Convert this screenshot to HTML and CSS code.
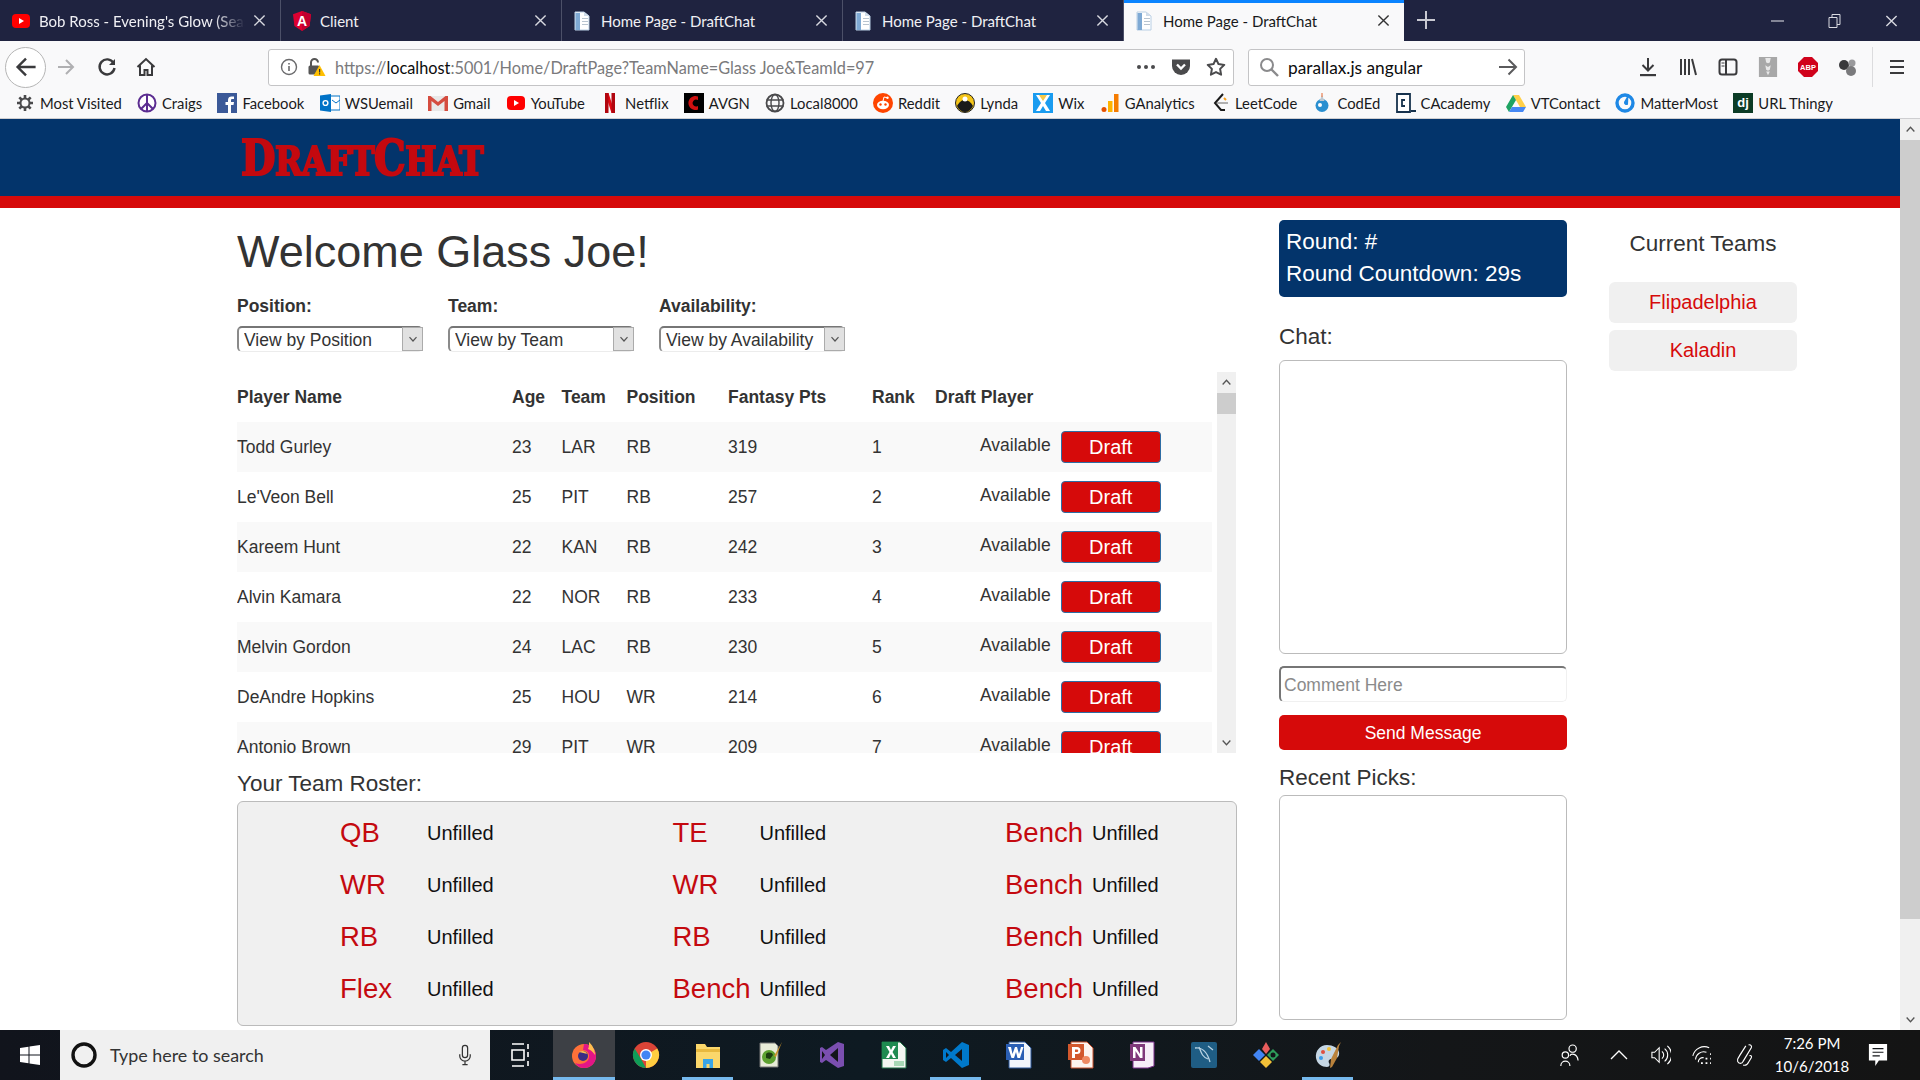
FILE: index.html
```html
<!DOCTYPE html>
<html lang="en">
<head>
<meta charset="utf-8">
<title>Home Page - DraftChat</title>
<link rel="stylesheet" href="styles.css">
</head>
<body>
<svg class="defs" aria-hidden="true">
  <symbol id="x" viewBox="0 0 14 14"><path d="M1.5 1.5 12.5 12.5M12.5 1.5 1.5 12.5" fill="none" stroke="currentColor" stroke-width="1.5"/></symbol>
  <symbol id="doc" viewBox="0 0 20 20"><path d="M2 1h9l5 4v14H2z" fill="#fff" stroke="#b9cfe4"/><path d="M2.5 2H7v17H2.5z" fill="#7ea9d4"/><path d="M11 1v4h5z" fill="#cfdcea"/><path d="M9 7h6v1H9zM9 10h6v1H9zM9 13h6v1H9z" fill="#b8c4d0"/></symbol>
  <symbol id="chev" viewBox="0 0 10 10"><path d="M1.5 3.2 5 7l3.5-3.8" fill="none" stroke="currentColor" stroke-width="1.2"/></symbol>
</svg>
<div class="browser">
  <div class="tabstrip">
    <div class="tab">
      <svg class="tab-icon" viewBox="0 0 20 20"><rect x="1" y="3" width="18" height="14" rx="4" fill="#f00"/><path d="M8 7v6l5-3z" fill="#fff"/></svg>
      <span class="tab-title tab-title-fade">Bob Ross - Evening's Glow (Season 28)</span>
      <svg class="tab-x"><use href="#x"/></svg>
    </div>
    <div class="tab">
      <svg class="tab-icon" viewBox="0 0 20 20"><path d="M10 0 1 3.2l1.4 11.9L10 20l7.600-4.900L19 3.200z" fill="#dd0031"/><path d="M10 0v20l7.600-4.900L19 3.200z" fill="#c3002f"/><text class="ng-a" x="10" y="15" text-anchor="middle">A</text></svg>
      <span class="tab-title">Client</span>
      <svg class="tab-x"><use href="#x"/></svg>
    </div>
    <div class="tab">
      <svg class="tab-icon"><use href="#doc"/></svg>
      <span class="tab-title">Home Page - DraftChat</span>
      <svg class="tab-x"><use href="#x"/></svg>
    </div>
    <div class="tab">
      <svg class="tab-icon"><use href="#doc"/></svg>
      <span class="tab-title">Home Page - DraftChat</span>
      <svg class="tab-x"><use href="#x"/></svg>
    </div>
    <div class="tab tab-active">
      <svg class="tab-icon"><use href="#doc"/></svg>
      <span class="tab-title">Home Page - DraftChat</span>
      <svg class="tab-x"><use href="#x"/></svg>
    </div>
    <svg class="newtab" viewBox="0 0 18 18"><path d="M9 0v18M0 9h18" stroke="#c8c9d2" stroke-width="2"/></svg>
    <div class="winctl">
      <svg class="win-btn" viewBox="0 0 12 12"><path d="M0 6h12" stroke="#d8d9e0"/></svg>
      <svg class="win-btn" viewBox="0 0 12 14"><path d="M3.500 3V.5h8v10H8.500M.5 3.500h8v10h-8z" fill="none" stroke="#d8d9e0"/></svg>
      <svg class="win-btn"><use href="#x" class="win-x"/></svg>
    </div>
  </div>

  <div class="toolbar">
    <div class="nav-back"><svg viewBox="0 0 20 20" class="ico-back"><path d="M18 10H3M10 3l-7 7 7 7" fill="none" stroke="#3a3a3c" stroke-width="2"/></svg></div>
    <svg viewBox="0 0 20 20" class="ico20 nav-fwd"><path d="M2 10h15M10 3l7 7-7 7" fill="none" stroke="#b0b0b2" stroke-width="2"/></svg>
    <svg viewBox="0 0 20 20" class="ico20 nav-reload"><path d="M16.500 6A7.500 7.500 0 1 0 17.500 11" fill="none" stroke="#3a3a3c" stroke-width="2.400"/><path d="M18 2v6h-6z" fill="#3a3a3c"/></svg>
    <svg viewBox="0 0 20 20" class="ico20 nav-home"><path d="M1.500 10 10 2l8.500 8M4 8.500V18h4.500v-5h3v5H16V8.500" fill="none" stroke="#3a3a3c" stroke-width="2"/></svg>
    <div class="urlbar">
      <svg viewBox="0 0 18 18" class="ico18"><circle cx="9" cy="9" r="7.500" fill="none" stroke="#6a6a6c" stroke-width="1.400"/><path d="M8.200 8h1.600v5H8.200zM8.200 5h1.600v1.600H8.200z" fill="#6a6a6c"/></svg>
      <svg viewBox="0 0 20 20" class="ico20 url-lock"><path d="M5 9V5.500a3.500 3.500 0 0 1 7 0" fill="none" stroke="#555" stroke-width="2"/><rect x="2.500" y="8.500" width="11" height="9" rx="1.500" fill="#555"/><path d="M13.500 8 19.500 19h-12z" fill="#ffbf00"/><path d="M13 12h1.200v3.500H13zM13 16.200h1.200v1.300H13z" fill="#333"/></svg>
      <span class="url-text"><span class="url-dim">https://</span>localhost<span class="url-dim">:5001/Home/DraftPage?TeamName=Glass Joe&amp;TeamId=97</span></span>
      <svg viewBox="0 0 20 6" class="url-more"><circle cx="3" cy="3" r="2" fill="#4a4a4c"/><circle cx="10" cy="3" r="2" fill="#4a4a4c"/><circle cx="17" cy="3" r="2" fill="#4a4a4c"/></svg>
      <svg viewBox="0 0 20 20" class="ico20 url-pocket"><path d="M1 2.500h18V9a9 9 0 0 1-18 0z" fill="#4a4a4c"/><path d="M6 7.500l4 4 4-4" fill="none" stroke="#fff" stroke-width="2.400"/></svg>
      <svg viewBox="0 0 20 20" class="ico20 url-star"><path d="M10 1.800l2.500 5.300 5.800.8-4.200 4 1 5.800L10 15.100l-5.100 2.600 1-5.800-4.200-4 5.800-.8z" fill="none" stroke="#4a4a4c" stroke-width="2" stroke-linejoin="round"/></svg>
    </div>
    <div class="searchbar">
      <svg viewBox="0 0 20 20" class="ico20"><circle cx="8" cy="8" r="6" fill="none" stroke="#8a8a8c" stroke-width="2"/><path d="M12.500 12.500 19 19" stroke="#8a8a8c" stroke-width="2.400"/></svg>
      <span class="search-text">parallax.js angular</span>
      <svg viewBox="0 0 20 20" class="ico20 search-go"><path d="M1 10h17M10.500 2.500 18 10l-7.500 7.500" fill="none" stroke="#5a5a5c" stroke-width="2"/></svg>
    </div>
    <div class="toolicons">
      <svg viewBox="0 0 20 20" class="ico20"><path d="M10 1v12M4.500 8l5.500 5.500L15.500 8" fill="none" stroke="#3a3a3c" stroke-width="2"/><path d="M2 17h16v2.200H2z" fill="#3a3a3c"/></svg>
      <svg viewBox="0 0 20 20" class="ico20"><path d="M3 2v16M7 2v16M11 2v16M14 2l4 16" fill="none" stroke="#3a3a3c" stroke-width="2"/></svg>
      <svg viewBox="0 0 20 20" class="ico20"><rect x="1.500" y="2.500" width="17" height="15" rx="2.500" fill="none" stroke="#3a3a3c" stroke-width="2"/><path d="M8 3v14" stroke="#3a3a3c" stroke-width="2"/><path d="M3.500 6h3M3.500 9h3" stroke="#3a3a3c"/></svg>
      <svg viewBox="0 0 20 22" class="ico20"><rect width="20" height="22" fill="#a8a8a8"/><path d="M7 1h6l-1 5-2 1-2-1zM7 9l3 2 3-2-1 5-2 1-2-1zM8 16h4l-2 4z" fill="#e8e8e8"/></svg>
      <svg viewBox="0 0 20 20" class="ico20"><path d="M6 0h8l6 6v8l-6 6H6l-6-6V6z" fill="#d0021b"/><text class="abp" x="10" y="13" text-anchor="middle">ABP</text></svg>
      <svg viewBox="0 0 20 20" class="ico20"><circle cx="6" cy="8" r="5" fill="#3a3a3c"/><circle cx="14" cy="6" r="3.500" fill="#9a9a9c"/><circle cx="13" cy="14" r="5" fill="#7a7a7c"/></svg>
      <span class="tool-sep"></span>
      <svg viewBox="0 0 20 20" class="ico20"><path d="M3 4h14M3 10h14M3 16h14" stroke="#3a3a3c" stroke-width="2.200"/></svg>
    </div>
  </div>

  <div class="bookmarks">
    <a class="bm"><svg viewBox="0 0 20 20" class="bm-ico"><path d="M10 2v3M10 15v3M2 10h3M15 10h3M4.300 4.300l2.200 2.200M13.500 13.500l2.200 2.200M15.700 4.300l-2.200 2.200M6.500 13.500l-2.200 2.200" stroke="#4a4a4c" stroke-width="2.600"/><circle cx="10" cy="10" r="4.500" fill="none" stroke="#4a4a4c" stroke-width="2"/></svg>Most Visited</a>
    <a class="bm"><svg viewBox="0 0 20 20" class="bm-ico"><circle cx="10" cy="10" r="8.500" fill="#fff" stroke="#5c2d91" stroke-width="2"/><path d="M10 1.500v17M10 10l-6 6M10 10l6 6" stroke="#5c2d91" stroke-width="2"/></svg>Craigs</a>
    <a class="bm"><svg viewBox="0 0 20 20" class="bm-ico"><rect width="20" height="20" y="0" fill="#3b5998"/><path d="M11 20v-8H8.500V9H11V7c0-2.500 1.500-3.500 3.500-3.500H17V6h-1.600c-1 0-1.400.5-1.400 1.300V9h3l-.5 3H14v8z" fill="#fff"/></svg>Facebook</a>
    <a class="bm"><svg viewBox="0 0 20 20" class="bm-ico"><path d="M8 3h12v14H8z" fill="#fff" stroke="#0072c6"/><path d="M0 2.500 11 1v18L0 17.500z" fill="#0072c6"/><circle cx="5.500" cy="10" r="2.400" fill="none" stroke="#fff" stroke-width="1.400"/><path d="M12 7l4 3 4-3" fill="none" stroke="#0072c6"/></svg>WSUemail</a>
    <a class="bm"><svg viewBox="0 0 20 20" class="bm-ico"><rect y="3" width="20" height="15" fill="#e8e8e8"/><path d="M0 3v15h3.500V8l6.500 5 6.500-5v10H20V3h-2.500L10 9 2.500 3z" fill="#d54c3f"/></svg>Gmail</a>
    <a class="bm"><svg viewBox="0 0 20 20" class="bm-ico"><rect x="1" y="3" width="18" height="14" rx="4" fill="#f00"/><path d="M8 7v6l5-3z" fill="#fff"/></svg>YouTube</a>
    <a class="bm"><svg viewBox="0 0 20 20" class="bm-ico"><path d="M5 0h3.500L15 20h-3.500z" fill="#e50914"/><path d="M5 0h3.500v20L5 20zM11.500 0H15v20h-3.500z" fill="#b1060f"/></svg>Netflix</a>
    <a class="bm"><svg viewBox="0 0 20 20" class="bm-ico"><rect width="20" height="20" fill="#000"/><path d="M14 3.500A7 7 0 1 0 14 16.500V13a3.500 3.500 0 1 1 0-6z" fill="#d01010"/></svg>AVGN</a>
    <a class="bm"><svg viewBox="0 0 20 20" class="bm-ico"><circle cx="10" cy="10" r="8.500" fill="none" stroke="#4a4a4c" stroke-width="1.800"/><ellipse cx="10" cy="10" rx="4" ry="8.500" fill="none" stroke="#4a4a4c" stroke-width="1.400"/><path d="M1.500 7h17M1.500 13h17" stroke="#4a4a4c" stroke-width="1.400"/></svg>Local8000</a>
    <a class="bm"><svg viewBox="0 0 20 20" class="bm-ico"><circle cx="10" cy="10" r="10" fill="#ff4500"/><ellipse cx="10" cy="12" rx="6" ry="4.200" fill="#fff"/><circle cx="7.500" cy="11.500" r="1.200" fill="#ff4500"/><circle cx="12.500" cy="11.500" r="1.200" fill="#ff4500"/><path d="M10 8l1-4 3 .7" fill="none" stroke="#fff"/><circle cx="14.500" cy="4.800" r="1.200" fill="#fff"/></svg>Reddit</a>
    <a class="bm"><svg viewBox="0 0 20 20" class="bm-ico"><circle cx="10" cy="10" r="9.500" fill="#f5c518" stroke="#222"/><path d="M2 13c3-5 5-6 8-6s6 2 8 6c-2 4-5 6-8 6s-6-2-8-6z" fill="#1a1a1a"/><circle cx="10" cy="6" r="2.500" fill="#fff"/></svg>Lynda</a>
    <a class="bm"><svg viewBox="0 0 20 20" class="bm-ico"><rect width="20" height="20" fill="#1a9cf0"/><path d="M3 2h4l3 5 3-5h4l-5 8 5 8h-4l-3-5-3 5H3l5-8z" fill="#fff"/><path d="M6 2h8l-4 6z" fill="#f7c948"/></svg>Wix</a>
    <a class="bm"><svg viewBox="0 0 20 20" class="bm-ico"><rect x="14" y="1" width="4.500" height="18" fill="#f57c00"/><rect x="8" y="8" width="4.500" height="11" fill="#ffb300"/><circle cx="4" cy="16.500" r="2.500" fill="#e65100"/></svg>GAnalytics</a>
    <a class="bm"><svg viewBox="0 0 20 20" class="bm-ico"><path d="M13 1 5 10l6 7h4" fill="none" stroke="#1a1a1a" stroke-width="2"/><path d="M7 10h11" stroke="#b0b0b0" stroke-width="2"/><path d="M14 5l2 2" stroke="#f89f1b" stroke-width="2"/></svg>LeetCode</a>
    <a class="bm"><svg viewBox="0 0 20 20" class="bm-ico"><circle cx="10" cy="12.500" r="6.500" fill="#2a8fd0"/><path d="M10 2l2.500 6h-5z" fill="#bfc8d0"/><path d="M10 0v4" stroke="#e6672e"/><circle cx="8" cy="12" r="2" fill="#fff"/></svg>CodEd</a>
    <a class="bm"><svg viewBox="0 0 20 20" class="bm-ico"><path d="M1 1h13v18H1z" fill="#fff" stroke="#17324d" stroke-width="1.800"/><path d="M9 7H6v6h3" fill="none" stroke="#17324d" stroke-width="1.800"/><path d="M15 17h5v2h-5z" fill="#17324d"/></svg>CAcademy</a>
    <a class="bm"><svg viewBox="0 0 20 20" class="bm-ico"><path d="M7 2h6l7 12h-6z" fill="#ffcf48"/><path d="M7 2 0 14l3 5 7-12z" fill="#1ea362"/><path d="M3 19h14l3-5H6z" fill="#4688f4"/></svg>VTContact</a>
    <a class="bm"><svg viewBox="0 0 20 20" class="bm-ico"><circle cx="10" cy="10" r="8" fill="none" stroke="#1e88e5" stroke-width="3.400"/><path d="M13.500 1 9 9a2.500 2.500 0 0 0 4 2.500z" fill="#1e88e5"/></svg>MatterMost</a>
    <a class="bm"><svg viewBox="0 0 20 20" class="bm-ico"><rect width="20" height="20" fill="#0c3c26"/><text class="dj" x="10" y="14" text-anchor="middle">dj</text></svg>URL Thingy</a>
  </div>

  <div class="viewport">
    <div class="page">
      <header class="site-header">
        <div class="logo"><span class="logo-big">D</span>raft<span class="logo-big">C</span>hat</div>
      </header>
      <div class="columns">
        <main class="main-col">
          <h1 class="welcome">Welcome Glass Joe!</h1>
          <div class="filters">
            <div class="filter">
              <label class="filter-label">Position:</label>
              <div class="select-wrap"><select class="select"><option>View by Position</option></select><span class="select-arrow"><svg><use href="#chev"/></svg></span></div>
            </div>
            <div class="filter">
              <label class="filter-label">Team:</label>
              <div class="select-wrap"><select class="select"><option>View by Team</option></select><span class="select-arrow"><svg><use href="#chev"/></svg></span></div>
            </div>
            <div class="filter">
              <label class="filter-label">Availability:</label>
              <div class="select-wrap"><select class="select"><option>View by Availability</option></select><span class="select-arrow"><svg><use href="#chev"/></svg></span></div>
            </div>
          </div>
          <div class="players">
            <div class="players-clip">
              <table class="player-table">
                <colgroup><col class="c-name"><col class="c-age"><col class="c-team"><col class="c-pos"><col class="c-pts"><col class="c-rank"><col></colgroup>
                <thead><tr><th>Player Name</th><th>Age</th><th>Team</th><th>Position</th><th>Fantasy Pts</th><th>Rank</th><th>Draft Player</th></tr></thead>
                <tbody>
                  <tr><td>Todd Gurley</td><td>23</td><td>LAR</td><td>RB</td><td>319</td><td>1</td><td class="draft-cell"><span class="avail">Available</span><button class="draft-btn">Draft</button></td></tr>
                  <tr><td>Le'Veon Bell</td><td>25</td><td>PIT</td><td>RB</td><td>257</td><td>2</td><td class="draft-cell"><span class="avail">Available</span><button class="draft-btn">Draft</button></td></tr>
                  <tr><td>Kareem Hunt</td><td>22</td><td>KAN</td><td>RB</td><td>242</td><td>3</td><td class="draft-cell"><span class="avail">Available</span><button class="draft-btn">Draft</button></td></tr>
                  <tr><td>Alvin Kamara</td><td>22</td><td>NOR</td><td>RB</td><td>233</td><td>4</td><td class="draft-cell"><span class="avail">Available</span><button class="draft-btn">Draft</button></td></tr>
                  <tr><td>Melvin Gordon</td><td>24</td><td>LAC</td><td>RB</td><td>230</td><td>5</td><td class="draft-cell"><span class="avail">Available</span><button class="draft-btn">Draft</button></td></tr>
                  <tr><td>DeAndre Hopkins</td><td>25</td><td>HOU</td><td>WR</td><td>214</td><td>6</td><td class="draft-cell"><span class="avail">Available</span><button class="draft-btn">Draft</button></td></tr>
                  <tr><td>Antonio Brown</td><td>29</td><td>PIT</td><td>WR</td><td>209</td><td>7</td><td class="draft-cell"><span class="avail">Available</span><button class="draft-btn">Draft</button></td></tr>
                </tbody>
              </table>
            </div>
            <div class="mini-scroll">
              <span class="sb-arrow"><svg class="sb-up"><use href="#chev"/></svg></span>
              <span class="mini-thumb"></span>
              <span class="sb-fill"></span>
              <span class="sb-arrow"><svg><use href="#chev"/></svg></span>
            </div>
          </div>
          <h4 class="roster-title">Your Team Roster:</h4>
          <div class="roster">
            <div class="slot"><span class="slot-pos">QB</span><span class="slot-val">Unfilled</span></div>
            <div class="slot"><span class="slot-pos">TE</span><span class="slot-val">Unfilled</span></div>
            <div class="slot"><span class="slot-pos">Bench</span><span class="slot-val">Unfilled</span></div>
            <div class="slot"><span class="slot-pos">WR</span><span class="slot-val">Unfilled</span></div>
            <div class="slot"><span class="slot-pos">WR</span><span class="slot-val">Unfilled</span></div>
            <div class="slot"><span class="slot-pos">Bench</span><span class="slot-val">Unfilled</span></div>
            <div class="slot"><span class="slot-pos">RB</span><span class="slot-val">Unfilled</span></div>
            <div class="slot"><span class="slot-pos">RB</span><span class="slot-val">Unfilled</span></div>
            <div class="slot"><span class="slot-pos">Bench</span><span class="slot-val">Unfilled</span></div>
            <div class="slot"><span class="slot-pos">Flex</span><span class="slot-val">Unfilled</span></div>
            <div class="slot"><span class="slot-pos">Bench</span><span class="slot-val">Unfilled</span></div>
            <div class="slot"><span class="slot-pos">Bench</span><span class="slot-val">Unfilled</span></div>
          </div>
        </main>

        <aside class="chat-col">
          <div class="round-box">
            <div>Round: #</div>
            <div>Round Countdown: 29s</div>
          </div>
          <h4 class="chat-title">Chat:</h4>
          <div class="chat-log"></div>
          <input class="comment" type="text" placeholder="Comment Here">
          <button class="send-btn">Send Message</button>
          <h4 class="picks-title">Recent Picks:</h4>
          <div class="picks-log"></div>
        </aside>

        <aside class="teams-col">
          <h4 class="teams-title">Current Teams</h4>
          <div class="team-pill">Flipadelphia</div>
          <div class="team-pill">Kaladin</div>
        </aside>
      </div>
    </div>
    <div class="page-scroll">
      <span class="sb-arrow-lg"><svg class="sb-up"><use href="#chev"/></svg></span>
      <span class="page-thumb"></span>
      <span class="sb-fill"></span>
      <span class="sb-arrow-lg"><svg><use href="#chev"/></svg></span>
    </div>
  </div>

  <footer class="taskbar">
    <div class="tb-start"><svg viewBox="0 0 20 20" class="tb-ico-start"><path d="M0 3l8.500-1.200V9.500H0zM9.500 1.600 20 0v9.500H9.500zM0 10.500h8.500v7.700L0 17zM9.500 10.500H20V20L9.500 18.400z" fill="#fff"/></svg></div>
    <div class="tb-search">
      <svg viewBox="0 0 26 26" class="tb-cortana"><circle cx="13" cy="13" r="11" fill="none" stroke="#111" stroke-width="3.400"/></svg>
      <span class="tb-search-text">Type here to search</span>
      <svg viewBox="0 0 16 24" class="tb-mic"><rect x="5" y="1" width="6" height="14" rx="3" fill="none" stroke="#333" stroke-width="1.400"/><path d="M2 11v2a6 6 0 0 0 12 0v-2M8 19v4M5 23h6" fill="none" stroke="#333" stroke-width="1.400"/></svg>
    </div>
    <div class="tb-taskview"><svg viewBox="0 0 20 24" class="tb-ico-view"><path d="M1 1h12M1 23h12M1 7h12v10H1zM17 1v5M17 9v5M17 18v5" fill="none" stroke="#fff" stroke-width="1.600"/></svg></div>
    <div class="tb-app tb-current running"><svg viewBox="0 0 28 28" class="tb-ico"><circle cx="14" cy="15" r="12" fill="#ff7139"/><path d="M14 3c7 0 12 5 12 12 0 7-5 12-12 12-4 0-7-2-9-5 5 2 13 1 14-6 .5-4-2-7-6-7z" fill="#e31587"/><path d="M19 1c3 3 6 7 6 13-2-3-4-5-7-6 1-2 1-4 1-7z" fill="#ffbd4f"/><circle cx="13" cy="15" r="5" fill="#3b2d83"/><path d="M9 11c3-2 7-1 8 2-2-1-5-1-8-2z" fill="#ffbd4f"/></svg></div>
    <div class="tb-app"><svg viewBox="0 0 28 28" class="tb-ico"><circle cx="14" cy="14" r="13" fill="#db4437"/><path d="M14 14 25.300 7.500A13 13 0 0 1 14 27z" fill="#ffcd40"/><path d="M14 27A13 13 0 0 1 2.700 7.500L8.500 17z" fill="#0f9d58"/><circle cx="14" cy="14" r="6" fill="#fff"/><circle cx="14" cy="14" r="4.600" fill="#4285f4"/></svg></div>
    <div class="tb-app running"><svg viewBox="0 0 28 28" class="tb-ico"><path d="M2 3h9l2 3h13v21H2z" fill="#fbd76b"/><path d="M2 8h24v3H2z" fill="#e8b93f"/><path d="M9 18h10v9h-3.500v-4h-3v4H9z" fill="#3aa5e6"/></svg></div>
    <div class="tb-app"><svg viewBox="0 0 28 28" class="tb-ico"><path d="M4 2h15l3 3v21H4z" fill="#e8ecd8" stroke="#777"/><circle cx="13" cy="16" r="7" fill="#5da130"/><path d="M10 13c2-2 6-2 7 1l-3 4-4-1z" fill="#1d3d10"/><path d="M26 1l-6 15-2-1z" fill="#c9932a"/></svg></div>
    <div class="tb-app"><svg viewBox="0 0 28 28" class="tb-ico"><path d="M20 1 26 3v22l-6 2-12-8-4 3-2-1V7l2-1 4 3z" fill="#7b4fb0"/><path d="M20 7 12 14l8 7z" fill="#131519"/><path d="M4 10v8l3-4z" fill="#131519"/></svg></div>
    <div class="tb-app"><svg viewBox="0 0 28 28" class="tb-ico"><path d="M2 1h18l6 6v20H2z" fill="#f3f6f1" stroke="#1d7044"/><path d="M2 1h16v17H2z" fill="#1f8a50"/><path d="M6 5h3l2 4 2-4h3l-3.500 6 3.500 6h-3l-2-4-2 4H6l3.500-6z" fill="#fff"/><path d="M14 20h10v5H14z" fill="#a7d7b5"/></svg></div>
    <div class="tb-app running"><svg viewBox="0 0 28 28" class="tb-ico"><path d="M20 1 27 4v20l-7 3-11-10-5 4-3-2V9l3-2 5 4z" fill="#0079cb"/><path d="M20 8l-7 6 7 6z" fill="#131519"/><path d="M4 11v6l3-3z" fill="#131519"/></svg></div>
    <div class="tb-app"><svg viewBox="0 0 28 28" class="tb-ico"><path d="M5 1h16l6 6v20H5z" fill="#f3f6fb" stroke="#2a5699"/><path d="M2 3h18v16H2z" fill="#2b5fb4"/><path d="M4 6h3l1.500 7L11 6h2l2 7 2-7h2.500L16 17h-2.500L12 11l-2 6H7.500z" fill="#fff"/></svg></div>
    <div class="tb-app"><svg viewBox="0 0 28 28" class="tb-ico"><path d="M5 1h16l6 6v20H5z" fill="#fdf4ef" stroke="#c9502a"/><path d="M2 3h16v16H2z" fill="#d2582d"/><path d="M6 6h5a3.500 3.500 0 0 1 0 7H9v4H6zM9 8.500V11h2a1.200 1.200 0 0 0 0-2.500z" fill="#fff"/><circle cx="20" cy="19" r="4" fill="#ef8a63"/></svg></div>
    <div class="tb-app"><svg viewBox="0 0 28 28" class="tb-ico"><path d="M5 1h21v24l-6 2H5z" fill="#f7eef8" stroke="#7d2f8d"/><path d="M2 3h15v17H2z" fill="#80397b"/><path d="M5 6h2.500L12 13V6h2.500v11H12L7.500 10v7H5z" fill="#fff"/></svg></div>
    <div class="tb-app"><svg viewBox="0 0 28 28" class="tb-ico"><rect x="1" y="1" width="26" height="26" rx="2" fill="#1f5d84"/><path d="M5 7c6-1 12 3 15 14M9 6c2 5 3 10 9 12M18 5l5 4" fill="none" stroke="#b8d3e4" stroke-width="1.300"/></svg></div>
    <div class="tb-app"><svg viewBox="0 0 28 28" class="tb-ico"><path d="M14 1l4 7-4 5-4-5z" fill="#e85d5d"/><path d="M1 14l6-6 6 6-6 6z" fill="#4285f4"/><path d="M15 14l6-6 6 6-6 6z" fill="#2e9e5b"/><path d="M8 21l6-6 6 6-6 6z" fill="#f2c037"/><circle cx="21" cy="14" r="2.500" fill="#131519"/></svg></div>
    <div class="tb-app running"><svg viewBox="0 0 28 28" class="tb-ico"><path d="M13 4C6 4 1 10 2 17c1 6 6 9 11 9 3 0 3-3 2-4-1-2 0-4 3-4 4 0 8-2 7-7-1-4-6-7-12-7z" fill="#c5d6e4"/><circle cx="9" cy="11" r="2" fill="#e04f3f"/><circle cx="15" cy="8" r="2" fill="#f2c037"/><circle cx="7" cy="17" r="2" fill="#3d9be9"/><path d="M27 1l-3 3-7 14-1 9 2-1 5-9 2-12z" fill="#b9823c"/></svg></div>
    <div class="tray">
      <div class="tray-cell tray-people"><svg viewBox="0 0 22 26" class="tray-ico"><circle cx="15" cy="6" r="4" fill="none" stroke="#fff" stroke-width="1.300"/><circle cx="7" cy="13" r="3.500" fill="none" stroke="#fff" stroke-width="1.300"/><path d="M2 25c0-7 10-7 10 0M12 14c1-3 8-3 9 5" fill="none" stroke="#fff" stroke-width="1.300"/></svg></div>
      <div class="tray-cell tray-caret"><svg viewBox="0 0 18 10" class="tray-caret-ico"><path d="M1 9 9 1l8 8" fill="none" stroke="#fff" stroke-width="1.300"/></svg></div>
      <div class="tray-cell tray-vol"><svg viewBox="0 0 22 22" class="tray-ico"><path d="M1 8h3l5-5v16l-5-5H1z" fill="none" stroke="#fff" stroke-width="1.200"/><path d="M12 7a5 5 0 0 1 0 8M15 4a9 9 0 0 1 0 14M18 1a13 13 0 0 1 0 20" fill="none" stroke="#fff" stroke-width="1.200"/></svg></div>
      <div class="tray-cell tray-wifi"><svg viewBox="0 0 22 22" class="tray-ico"><path d="M2 12A13 13 0 0 1 20 3M5 16a9 9 0 0 1 12-8M8 19a5 5 0 0 1 6-5" fill="none" stroke="#fff" stroke-width="1.200"/><path d="M11 20h2M16 20h2M16 15h2M21 20h1M21 15h1M21 10h1" stroke="#fff" stroke-width="2"/></svg></div>
      <div class="tray-cell tray-pen"><svg viewBox="0 0 22 26" class="tray-ico"><path d="M16 2c2-1 4 1 3 3l-9 15c-1 3-5 3-6 0s1-4 2-6l7-11M10 24c3 1 5-1 6-3l3-5c1-2-1-3-2-2" fill="none" stroke="#fff" stroke-width="1.300"/></svg></div>
      <div class="tray-cell tray-clock"><div>7:26 PM</div><div>10/6/2018</div></div>
      <div class="tray-cell tray-notif"><svg viewBox="0 0 22 26" class="tray-ico"><path d="M1 1h20v18h-9l-4 6v-6H1z" fill="#fff"/><path d="M5 6h12M5 10h12M5 14h8" stroke="#131519" stroke-width="1.300"/></svg></div>
    </div>
  </footer>
</div>
</body>
</html>
```

FILE: styles.css
```css
* { box-sizing: border-box; }
html, body { margin: 0; padding: 0; height: 100%; overflow: hidden; background: #fff; }
body { font-family: "Liberation Sans", Arial, sans-serif; font-size: 17.5px; color: #333; }
.defs { display: none; }
h1, h4 { margin: 0; font-weight: 400; }
svg { display: block; flex: none; }

.browser { display: flex; flex-direction: column; height: 1080px; }

/* tab strip */
.tabstrip { display: flex; height: 41px; flex: none; background: #1f2340; color: #f0f0f4; font-family: "Lato", sans-serif; font-size: 15px; }
.tab { width: 281px; display: flex; align-items: center; padding: 0 14px 0 11px; border-right: 1px solid #4c5068; }
.tab-active { width: 280px; background: #f9f9fa; color: #18191b; border-right: 0; border-top: 3px solid #0a84ff; padding-bottom: 3px; }
.tab-icon { width: 20px; height: 20px; margin-right: 8px; }
.tab-title { flex: 1; min-width: 0; white-space: nowrap; overflow: hidden; }
.tab-title-fade { -webkit-mask-image: linear-gradient(to right, #000 85%, transparent); mask-image: linear-gradient(to right, #000 85%, transparent); }
.tab-x { width: 13px; height: 13px; margin-left: 8px; color: #d8d9e0; }
.tab-active .tab-x { color: #333; }
.ng-a { font: 700 14px "Liberation Sans", sans-serif; fill: #fff; }
.newtab { width: 18px; height: 18px; margin: 11px 0 0 13px; }
.winctl { margin-left: auto; display: flex; align-items: center; gap: 44px; padding-right: 22px; }
.win-btn { width: 13px; height: 14px; color: #d8d9e0; }

/* toolbar */
.toolbar { height: 47px; flex: none; display: flex; align-items: center; background: #f9f9fa; padding: 5px 0 0 5px; }
.ico20 { width: 20px; height: 20px; }
.ico18 { width: 18px; height: 18px; }
.ico-back { width: 24px; height: 24px; }
.nav-back { width: 41px; height: 41px; border-radius: 50%; border: 1px solid #b5b5b5; background: #fff; display: flex; align-items: center; justify-content: center; }
.nav-fwd { margin-left: 10px; }
.nav-reload { margin-left: 21px; }
.nav-home { margin-left: 19px; }
.urlbar { margin-left: 112px; width: 966px; height: 37px; background: #fff; border: 1px solid #c4c4c6; border-radius: 3px; display: flex; align-items: center; padding: 0 7px 0 11px; }
.url-lock { margin-left: 8px; }
.url-text { margin-left: 9px; font-family: "Lato", sans-serif; font-size: 16.3px; color: #0c0c0d; white-space: nowrap; }
.url-dim { color: #7a7a7c; }
.url-more { width: 20px; height: 6px; margin-left: auto; }
.url-pocket { margin-left: 15px; }
.url-star { margin-left: 15px; }
.searchbar { margin-left: 14px; width: 277px; height: 37px; background: #fff; border: 1px solid #c4c4c6; border-radius: 3px; display: flex; align-items: center; padding: 0 6px 0 10px; }
.search-text { margin-left: 9px; font-family: "Lato", sans-serif; font-size: 17.3px; color: #0c0c0d; white-space: nowrap; }
.search-go { margin-left: auto; }
.toolicons { display: flex; align-items: center; margin-left: 113px; gap: 20px; }
.tool-sep { width: 1px; height: 40px; background: #dcdcde; margin: 0 -6px 0 -6px; }

/* bookmarks */
.bookmarks { height: 31px; flex: none; background: #f9f9fa; border-bottom: 1px solid #cfcfd1; display: flex; align-items: center; gap: 15.25px; padding-left: 15px; font-family: "Lato", sans-serif; font-size: 14.8px; color: #1a1a1c; }
.bm { display: flex; align-items: center; gap: 5px; white-space: nowrap; }
.bm-ico { width: 20px; height: 20px; }
.abp { font: 700 7.500px "Liberation Sans", sans-serif; fill: #fff; }
.dj { font: 700 13px "Liberation Sans", sans-serif; fill: #fff; }

/* viewport */
.viewport { flex: 1; min-height: 0; display: flex; }
.page { flex: 1; min-width: 0; overflow: hidden; }
.site-header { height: 89px; background: #03346b; border-bottom: 12px solid #d60a0a; display: flex; align-items: flex-start; padding: 20px 0 0 241px; }
.logo { font-family: "DejaVu Serif Condensed", "DejaVu Serif", serif; font-weight: 700; font-size: 40px; line-height: 38px; text-transform: uppercase; color: #c4090f; letter-spacing: -0.6px; -webkit-text-stroke: 2px #c4090f; white-space: nowrap; transform: scaleX(0.92); transform-origin: left center; }
.logo-big { font-size: 48px; }

.columns { display: flex; padding-left: 237px; }
.main-col { width: 1000px; flex: none; }
.welcome { font-size: 45px; line-height: 50px; margin-top: 19px; color: #333; }
.filters { display: flex; gap: 25px; margin-top: 17px; }
.filter { width: 186px; }
.filter-label { display: block; font-weight: 700; line-height: 25px; margin-bottom: 7px; }
.select-wrap { position: relative; height: 26px; }
.select { appearance: none; width: 100%; height: 26px; padding: 0 0 0 5px; font: 17.5px "Liberation Sans", sans-serif; color: #333; background: #fff; border: 1px solid #ececec; border-top: 2px solid #767676; border-left: 2px solid #8a8a8a; border-radius: 5px; }
.select-arrow { position: absolute; right: 0; top: 1px; width: 21px; height: 24px; background: #e1e1e1; border: 1px solid #ababab; display: flex; align-items: center; justify-content: center; color: #555; }
.select-arrow svg { width: 10px; height: 10px; }

.players { display: flex; gap: 5px; height: 381px; margin-top: 20px; }
.players-clip { width: 975px; flex: none; overflow: hidden; }
.player-table { width: 975px; table-layout: fixed; border-collapse: collapse; }
.c-name { width: 275px; }
.c-age { width: 49.5px; }
.c-team { width: 65px; }
.c-pos { width: 101.5px; }
.c-pts { width: 144px; }
.c-rank { width: 63px; }
.player-table th { height: 50px; padding: 0; text-align: left; font-weight: 700; }
.player-table td { height: 50px; padding: 0; }
.player-table tbody tr:nth-child(odd) { background: #f9f9f9; }
.draft-cell { white-space: nowrap; padding-left: 45px !important; }
.avail { display: inline-block; position: relative; top: -1px; }
.draft-btn { width: 100px; height: 32px; margin-left: 10px; padding: 0; background: #d60a0a; color: #fff; border: 1px solid #2e6da4; border-radius: 4px; font: 20px "Liberation Sans", sans-serif; vertical-align: middle; }
.mini-scroll { width: 19px; background: #f0f0f0; display: flex; flex-direction: column; color: #555; }
.sb-arrow { height: 21px; display: flex; align-items: center; justify-content: center; flex: none; }
.sb-arrow svg, .sb-arrow-lg svg { width: 11px; height: 11px; }
.sb-up { transform: rotate(180deg); }
.mini-thumb { height: 21px; background: #cdcdcd; flex: none; }
.sb-fill { flex: 1; }

.roster-title { font-size: 22.5px; line-height: 30px; margin-top: 16px; margin-bottom: 2px; }
.roster { width: 1000px; height: 225px; background: #f0f0f0; border: 1px solid #bbb; border-radius: 6px; padding: 5px 0 0 102px; display: grid; grid-template-columns: repeat(3, 332.5px); grid-auto-rows: 52px; }
.slot { display: flex; align-items: center; }
.slot-pos { width: 87px; font-size: 27.5px; color: #c4090f; }
.slot-val { font-size: 20px; color: #111; }

/* chat */
.chat-col { width: 288px; flex: none; margin-left: 42px; padding-top: 12px; }
.round-box { height: 77px; background: #03346b; color: #fff; border-radius: 5px; padding: 6px 7px; font-size: 22.5px; line-height: 32px; }
.chat-title { font-size: 22.5px; line-height: 30px; margin-top: 25px; margin-bottom: 8px; }
.chat-log { height: 294px; border: 1px solid #bbb; border-radius: 6px; background: #fff; }
.comment { display: block; width: 100%; height: 36px; margin-top: 12px; padding: 1px 0 0 3px; font: 17.5px "Liberation Sans", sans-serif; color: #333; border: 1px solid #f0f0f0; border-top: 2px solid #767676; border-left: 2px solid #767676; border-radius: 5px; background: #fff; outline: none; }
.comment::placeholder { color: #8b8b8b; opacity: 1; }
.send-btn { display: block; width: 100%; height: 35px; margin-top: 13px; padding: 1px 0 0; background: #d60a0a; color: #fff; border: 0; border-radius: 5px; font: 17.5px "Liberation Sans", sans-serif; }
.picks-title { font-size: 22.5px; line-height: 30px; margin-top: 13px; margin-bottom: 2px; }
.picks-log { height: 225px; border: 1px solid #bbb; border-radius: 6px; background: #fff; }

/* teams */
.teams-col { width: 188px; flex: none; margin-left: 42px; padding-top: 21px; }
.teams-title { font-size: 22.5px; line-height: 30px; text-align: center; margin-bottom: 23px; }
.team-pill { height: 41px; margin-bottom: 7px; background: #f0f0f0; border-radius: 6px; color: #d60a0a; font-size: 20px; display: flex; align-items: center; justify-content: center; }

/* page scrollbar */
.page-scroll { width: 20px; flex: none; background: #f0f0f0; display: flex; flex-direction: column; color: #555; }
.sb-arrow-lg { height: 21px; display: flex; align-items: center; justify-content: center; flex: none; }
.page-thumb { height: 779px; background: #cdcdcd; flex: none; }

/* taskbar */
.taskbar { height: 50px; flex: none; display: flex; color: #fff; background: linear-gradient(to right, #11141c 0%, #0e1a22 45%, #141618 75%, #141414 100%); }
.tb-start { width: 60px; display: flex; align-items: center; justify-content: center; }
.tb-ico-start { width: 20px; height: 20px; }
.tb-search { width: 430px; background: #f0f0f0; display: flex; align-items: center; padding: 0 18px 0 11px; color: #333; }
.tb-cortana { width: 26px; height: 26px; }
.tb-search-text { margin-left: 13px; font-family: "Lato", sans-serif; font-size: 17.9px; white-space: nowrap; }
.tb-mic { width: 14px; height: 24px; margin-left: auto; }
.tb-taskview { width: 62.5px; display: flex; align-items: center; justify-content: center; }
.tb-ico-view { width: 20px; height: 24px; }
.tb-app { width: 62px; position: relative; display: flex; align-items: center; justify-content: center; }
.tb-ico { width: 28px; height: 28px; }
.tb-current { background: #3d4045; }
.running::after { content: ""; position: absolute; left: 5.5px; right: 5.5px; bottom: 0; height: 3px; background: #76b9ed; }
.tb-current::after { left: 0; right: 0; }
.tray { margin-left: auto; display: flex; padding-right: 25px; }
.tray-cell { display: flex; align-items: center; justify-content: center; }
.tray-people { width: 50px; }
.tray-caret { width: 50px; }
.tray-vol { width: 33px; }
.tray-wifi { width: 48px; }
.tray-pen { width: 38px; }
.tray-clock { width: 98px; flex-direction: column; font-family: "Lato", sans-serif; font-size: 15px; line-height: 23px; }
.tray-notif { width: 34px; }
.tray-ico { width: 20px; height: 24px; }
.tray-caret-ico { width: 18px; height: 10px; }
```
